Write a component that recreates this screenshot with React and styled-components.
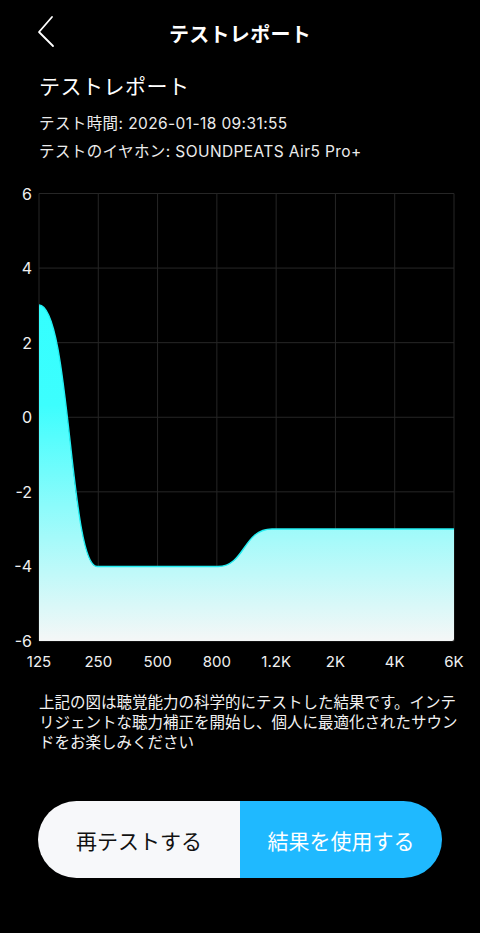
import React from 'react';
import styled, { createGlobalStyle } from 'styled-components';

const GlobalStyle = createGlobalStyle`
  html, body {
    margin: 0;
    padding: 0;
    background: #000;
  }
  body {
    font-family: Inter, "Noto Sans CJK JP", sans-serif;
    color: #fff;
  }
`;

const Page = styled.div`
  width: 480px;
  min-height: 933px;
  background: #000;
  display: flex;
  flex-direction: column;
`;

const Header = styled.div`
  height: 66px;
  display: flex;
  align-items: center;
  justify-content: center;
  position: relative;
`;

const BackButton = styled.button`
  position: absolute;
  left: 30px;
  top: 12px;
  width: 30px;
  height: 42px;
  padding: 0;
  border: none;
  background: none;
  cursor: pointer;
`;

const HeaderTitle = styled.h1`
  margin: 0;
  font-size: 20px;
  font-weight: 700;
  letter-spacing: 0.3px;
`;

const Info = styled.div`
  padding: 6px 39px 0;
`;

const SectionTitle = styled.h2`
  margin: 0;
  font-size: 21px;
  font-weight: 400;
  line-height: 30px;
  letter-spacing: 0.5px;
`;

const InfoLine = styled.div`
  font-size: 15.5px;
  line-height: 28px;
  letter-spacing: 0.4px;
  color: #ececec;
  &:first-of-type {
    margin-top: 8px;
  }
`;

const ChartWrap = styled.div`
  margin-top: 14px;
  height: 500px;
`;

const Description = styled.p`
  margin: 13px 0 0;
  padding: 0 20px 0 39px;
  font-size: 15.5px;
  line-height: 20px;
  color: #f2f2f2;
`;

const ButtonRow = styled.div`
  margin: 48px 38px 0;
  height: 77px;
  border-radius: 39px;
  overflow: hidden;
  display: flex;
`;

const ActionButton = styled.button`
  flex: 1;
  border: none;
  padding: 0;
  font-family: inherit;
  font-size: 21px;
  background: ${(p) => (p.primary ? '#1fb9ff' : '#f7f8fa')};
  color: ${(p) => (p.primary ? '#fff' : '#111')};
  cursor: pointer;
`;

const yLabels = [6, 4, 2, 0, -2, -4, -6];
const xLabels = ['125', '250', '500', '800', '1.2K', '2K', '4K', '6K'];

const LEFT = 39;
const RIGHT = 454;
const TOP = 193.5;
const BOTTOM = 641;
const yOf = (v) => TOP + ((6 - v) / 12) * (BOTTOM - TOP);
const xOf = (i) => LEFT + (i / 7) * (RIGHT - LEFT);

const curve =
  'M39,305 C70,305 70,566.5 97,566.5 L218,566.5 C245,566.5 243,529 272,529 L454,529';

const Chart = () => (
  <svg width="480" height="500" viewBox="0 180 480 500">
    <defs>
      <linearGradient id="fill" x1="0" y1="304" x2="0" y2="641" gradientUnits="userSpaceOnUse">
        <stop offset="0" stopColor="#33ffff" />
        <stop offset="0.3" stopColor="#3dfefe" />
        <stop offset="1" stopColor="#f5f7f7" />
      </linearGradient>
    </defs>
    {yLabels.map((v) => (
      <line key={'h' + v} x1={LEFT} x2={RIGHT} y1={yOf(v)} y2={yOf(v)} stroke="#262626" strokeWidth="1" />
    ))}
    {xLabels.map((l, i) => (
      <line key={'v' + l} x1={xOf(i)} x2={xOf(i)} y1={TOP} y2={BOTTOM} stroke="#262626" strokeWidth="1" />
    ))}
    <path d={`${curve} L454,639 Q454,641 452,641 L39,641 Z`} fill="url(#fill)" />
    <path d={curve} fill="none" stroke="#22eef2" strokeWidth="1.4" />
    {yLabels.map((v) => (
      <text
        key={'yl' + v}
        x="32"
        y={yOf(v) + 6}
        fill="#f0f0f0"
        fontSize="16"
        textAnchor="end"
        fontFamily="Inter, sans-serif"
      >
        {v}
      </text>
    ))}
    {xLabels.map((l, i) => (
      <text
        key={'xl' + l}
        x={xOf(i)}
        y="667"
        fill="#f0f0f0"
        fontSize="15"
        textAnchor="middle"
        fontFamily="Inter, sans-serif"
      >
        {l}
      </text>
    ))}
  </svg>
);

const App = () => (
  <Page>
    <GlobalStyle />
    <Header>
      <BackButton aria-label="back">
        <svg width="30" height="42" viewBox="30 12 30 42">
          <path d="M52,17 L39,32 L53,46" fill="none" stroke="#fff" strokeWidth="1.8" strokeLinecap="round" strokeLinejoin="round" />
        </svg>
      </BackButton>
      <HeaderTitle>テストレポート</HeaderTitle>
    </Header>
    <Info>
      <SectionTitle>テストレポート</SectionTitle>
      <InfoLine>テスト時間: 2026-01-18 09:31:55</InfoLine>
      <InfoLine>テストのイヤホン: SOUNDPEATS Air5 Pro+</InfoLine>
    </Info>
    <ChartWrap>
      <Chart />
    </ChartWrap>
    <Description>
      上記の図は聴覚能力の科学的にテストした結果です。インテリジェントな聴力補正を開始し、個人に最適化されたサウンドをお楽しみください
    </Description>
    <ButtonRow>
      <ActionButton>再テストする</ActionButton>
      <ActionButton primary>結果を使用する</ActionButton>
    </ButtonRow>
  </Page>
);

export default App;
